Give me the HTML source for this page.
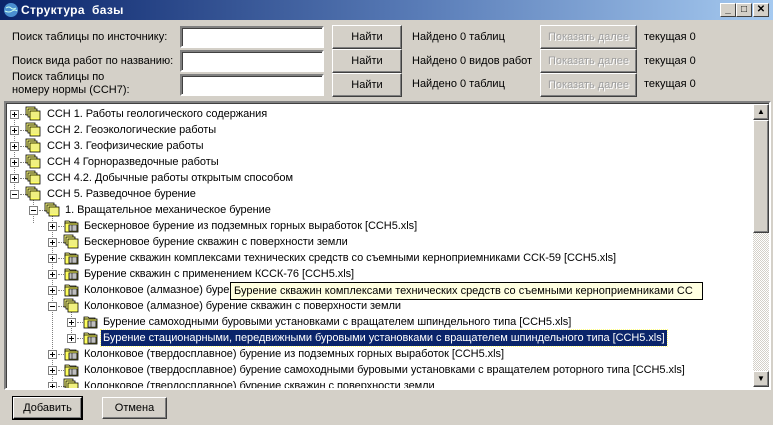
<!DOCTYPE html>
<html><head><meta charset="utf-8"><style>
*{box-sizing:border-box;margin:0;padding:0}
html,body{width:773px;height:425px;overflow:hidden}
body{background:#d4d0c8;font-family:"Liberation Sans",sans-serif;font-size:11px;color:#000;position:relative}
.a{position:absolute}
.title{left:0;top:0;width:773px;height:20px;background:linear-gradient(90deg,#0a246a,#5a7db8 55%,#a6caf0);color:#fff;font-weight:bold;font-size:12px;line-height:20px;padding-left:21px;letter-spacing:.3px}
.tb{width:16px;height:14px;top:3px;background:#d4d0c8;border:1px solid;border-color:#fff #404040 #404040 #fff;font-size:10px;line-height:12px;text-align:center;font-weight:bold;color:#000}
.inp{background:#fff;border:2px solid;border-color:#808080 #fff #fff #808080;box-shadow:inset 1px 1px 0 #404040;width:144px;height:22px}
.btn{border:1px solid;border-color:#fff #404040 #404040 #fff;box-shadow:inset -1px -1px 0 #808080;text-align:center;background:#d4d0c8}
.dis{color:#a0a0a0;text-shadow:1px 1px 0 #fff}
.tree{left:4px;top:101px;width:767px;height:289px;background:#fff;border:2px solid;border-color:#808080 #fff #fff #808080;box-shadow:inset 1px 1px 0 #404040;overflow:hidden}
.in{position:absolute;left:-2px;top:0;width:760px;height:285px}
.row{position:absolute;height:16px;line-height:16px;white-space:nowrap;letter-spacing:-0.05px}
.pb{position:absolute;width:9px;height:9px;border:1px solid #808080;background:#fff;top:4px}
.pb:before{content:"";position:absolute;left:1px;top:3px;width:5px;height:1px;background:#000}
.pb.p:after{content:"";position:absolute;left:3px;top:1px;width:1px;height:5px;background:#000}
.ic{position:absolute;top:0}
.dot{position:absolute;top:8px;height:1px;border-top:1px dotted #808080}
.vl{position:absolute;width:1px;border-left:1px dotted #808080}
</style></head><body>
<div class="a title"><svg class="a" style="left:3px;top:2px" width="16" height="16"><circle cx="8" cy="8" r="7" fill="#4a8fd0"/><path d="M3 6 Q6 4 8 6 T13 6 M2 9 Q6 11 9 9 T14 9" stroke="#cfe" fill="none"/></svg>Структура&nbsp; базы</div>
<div class="a tb" style="left:720px">_</div><div class="a tb" style="left:736px">□</div><div class="a tb" style="left:753px">✕</div>

<div class="a" style="left:12px;top:31px">Поиск таблицы по инсточнику:</div>
<div class="a" style="left:12px;top:55px">Поиск вида работ по названию:</div>
<div class="a" style="left:12px;top:71px;line-height:13px">Поиск таблицы по<br>номеру нормы (ССН7):</div>
<div class="a inp" style="left:180px;top:26px"></div>
<div class="a inp" style="left:180px;top:50px"></div>
<div class="a inp" style="left:180px;top:74px"></div>
<div class="a btn" style="left:332px;top:25px;width:70px;height:24px;line-height:22px">Найти</div>
<div class="a btn" style="left:332px;top:49px;width:70px;height:24px;line-height:22px">Найти</div>
<div class="a btn" style="left:332px;top:73px;width:70px;height:24px;line-height:22px">Найти</div>
<div class="a" style="left:412px;top:31px">Найдено 0 таблиц</div>
<div class="a" style="left:412px;top:55px">Найдено 0 видов работ</div>
<div class="a" style="left:412px;top:78px">Найдено 0 таблиц</div>
<div class="a btn dis" style="left:540px;top:25px;width:97px;height:24px;line-height:22px">Показать далее</div>
<div class="a btn dis" style="left:540px;top:49px;width:97px;height:24px;line-height:22px">Показать далее</div>
<div class="a btn dis" style="left:540px;top:73px;width:97px;height:24px;line-height:22px">Показать далее</div>
<div class="a" style="left:644px;top:31px">текущая 0</div>
<div class="a" style="left:644px;top:55px">текущая 0</div>
<div class="a" style="left:644px;top:78px">текущая 0</div>

<svg width="0" height="0" style="position:absolute"><defs>
<g id="m"><rect x="1" y="1" width="9" height="8" fill="#ffff80" stroke="#000" stroke-width=".8"/><rect x="3" y="3" width="9" height="8" fill="#ffff80" stroke="#000" stroke-width=".8"/><rect x="5" y="5" width="10" height="9" fill="#ffff60" stroke="#000" stroke-width=".8"/><path d="M6 7h8M6 9h8M6 11h8" stroke="#e0e0a0"/></g>
<g id="t"><path d="M2 3h4l1 1h6v2H2z" fill="#ffff80" stroke="#000" stroke-width=".8"/><rect x="2" y="5" width="13" height="9" fill="#ffff60" stroke="#000" stroke-width=".8"/><rect x="6" y="7" width="8" height="6" fill="#fff" stroke="#000" stroke-width=".8"/><path d="M6 9h8M6 11h8M9 7v6" stroke="#000" stroke-width=".6"/></g>
</defs></svg>

<div class="a tree"><div class="in">
<div class="vl" style="left:10px;top:12px;height:80px"></div>
<div class="vl" style="left:29px;top:92px;height:28px"></div>
<div class="vl" style="left:48px;top:108px;height:176px"></div>
<div class="vl" style="left:67px;top:204px;height:28px"></div>

<div class="row" style="top:3px;left:0"><div class="pb p" style="left:6px"></div><div class="dot" style="left:16px;width:6px"></div><svg class="ic" style="left:21px" width="16" height="16"><use href="#m"/></svg><span class="a" style="left:43px">ССН 1. Работы геологического содержания</span></div>
<div class="row" style="top:19px;left:0"><div class="pb p" style="left:6px"></div><div class="dot" style="left:16px;width:6px"></div><svg class="ic" style="left:21px" width="16" height="16"><use href="#m"/></svg><span class="a" style="left:43px">ССН 2. Геоэкологические работы</span></div>
<div class="row" style="top:35px;left:0"><div class="pb p" style="left:6px"></div><div class="dot" style="left:16px;width:6px"></div><svg class="ic" style="left:21px" width="16" height="16"><use href="#m"/></svg><span class="a" style="left:43px">ССН 3. Геофизические работы</span></div>
<div class="row" style="top:51px;left:0"><div class="pb p" style="left:6px"></div><div class="dot" style="left:16px;width:6px"></div><svg class="ic" style="left:21px" width="16" height="16"><use href="#m"/></svg><span class="a" style="left:43px">ССН 4 Горноразведочные работы</span></div>
<div class="row" style="top:67px;left:0"><div class="pb p" style="left:6px"></div><div class="dot" style="left:16px;width:6px"></div><svg class="ic" style="left:21px" width="16" height="16"><use href="#m"/></svg><span class="a" style="left:43px">ССН 4.2. Добычные работы открытым способом</span></div>
<div class="row" style="top:83px;left:0"><div class="pb" style="left:6px"></div><div class="dot" style="left:16px;width:6px"></div><svg class="ic" style="left:21px" width="16" height="16"><use href="#m"/></svg><span class="a" style="left:43px">ССН 5. Разведочное бурение</span></div>
<div class="row" style="top:99px;left:0"><div class="pb" style="left:25px"></div><div class="dot" style="left:35px;width:6px"></div><svg class="ic" style="left:40px" width="16" height="16"><use href="#m"/></svg><span class="a" style="left:61px">1. Вращательное механическое бурение</span></div>
<div class="row" style="top:115px;left:0"><div class="pb p" style="left:44px"></div><div class="dot" style="left:54px;width:6px"></div><svg class="ic" style="left:59px" width="16" height="16"><use href="#t"/></svg><span class="a" style="left:80px">Бескерновое бурение из подземных горных выработок [ССН5.xls]</span></div>
<div class="row" style="top:131px;left:0"><div class="pb p" style="left:44px"></div><div class="dot" style="left:54px;width:6px"></div><svg class="ic" style="left:59px" width="16" height="16"><use href="#m"/></svg><span class="a" style="left:80px">Бескерновое бурение скважин с поверхности земли</span></div>
<div class="row" style="top:147px;left:0"><div class="pb p" style="left:44px"></div><div class="dot" style="left:54px;width:6px"></div><svg class="ic" style="left:59px" width="16" height="16"><use href="#t"/></svg><span class="a" style="left:80px">Бурение скважин комплексами технических средств со съемными керноприемниками ССК-59 [ССН5.xls]</span></div>
<div class="row" style="top:163px;left:0"><div class="pb p" style="left:44px"></div><div class="dot" style="left:54px;width:6px"></div><svg class="ic" style="left:59px" width="16" height="16"><use href="#t"/></svg><span class="a" style="left:80px">Бурение скважин с применением КССК-76 [ССН5.xls]</span></div>
<div class="row" style="top:179px;left:0"><div class="pb p" style="left:44px"></div><div class="dot" style="left:54px;width:6px"></div><svg class="ic" style="left:59px" width="16" height="16"><use href="#t"/></svg><span class="a" style="left:80px">Колонковое (алмазное) бурение</span></div>
<div class="row" style="top:195px;left:0"><div class="pb" style="left:44px"></div><div class="dot" style="left:54px;width:6px"></div><svg class="ic" style="left:59px" width="16" height="16"><use href="#m"/></svg><span class="a" style="left:80px">Колонковое (алмазное) бурение скважин с поверхности земли</span></div>
<div class="row" style="top:211px;left:0"><div class="pb p" style="left:63px"></div><div class="dot" style="left:73px;width:6px"></div><svg class="ic" style="left:78px" width="16" height="16"><use href="#t"/></svg><span class="a" style="left:99px">Бурение самоходными буровыми установками с вращателем шпиндельного типа [ССН5.xls]</span></div>
<div class="row" style="top:227px;left:0"><div class="pb p" style="left:63px"></div><div class="dot" style="left:73px;width:6px"></div><svg class="ic" style="left:78px" width="16" height="16"><use href="#t"/></svg><span class="a" style="left:97px;top:0;height:16px;padding:0 2px;background:#0a246a;color:#fff;outline:1px dotted #ffff80">Бурение стационарными, передвижными буровыми установками с вращателем шпиндельного типа [ССН5.xls]</span></div>
<div class="row" style="top:243px;left:0"><div class="pb p" style="left:44px"></div><div class="dot" style="left:54px;width:6px"></div><svg class="ic" style="left:59px" width="16" height="16"><use href="#t"/></svg><span class="a" style="left:80px">Колонковое (твердосплавное) бурение из подземных горных выработок [ССН5.xls]</span></div>
<div class="row" style="top:259px;left:0"><div class="pb p" style="left:44px"></div><div class="dot" style="left:54px;width:6px"></div><svg class="ic" style="left:59px" width="16" height="16"><use href="#t"/></svg><span class="a" style="left:80px">Колонковое (твердосплавное) бурение самоходными буровыми установками с вращателем роторного типа [ССН5.xls]</span></div>
<div class="row" style="top:275px;left:0"><div class="pb p" style="left:44px"></div><div class="dot" style="left:54px;width:6px"></div><svg class="ic" style="left:59px" width="16" height="16"><use href="#m"/></svg><span class="a" style="left:80px">Колонковое (твердосплавное) бурение скважин с поверхности земли</span></div>

<div class="a" style="left:226px;top:179px;height:18px;width:473px;background:#ffffe1;border:1px solid #000;line-height:16px;padding-left:3px;white-space:nowrap;overflow:hidden">Бурение скважин комплексами технических средств со съемными керноприемниками СС</div>
</div>
<div class="a" style="left:747px;top:1px;width:16px;height:283px;background:repeating-conic-gradient(#d4d0c8 0 25%,#fff 0 50%) 0 0/2px 2px"></div>
<div class="a btn" style="left:747px;top:1px;width:16px;height:16px;font-size:8px;line-height:13px">▲</div>
<div class="a btn" style="left:747px;top:17px;width:16px;height:113px"></div>
<div class="a btn" style="left:747px;top:268px;width:16px;height:16px;font-size:8px;line-height:14px">▼</div>
</div>

<div class="a btn" style="left:13px;top:397px;width:69px;height:22px;line-height:20px;border-color:#fff #000 #000 #fff;outline:1px solid #000">Добавить</div>
<div class="a btn" style="left:102px;top:397px;width:65px;height:22px;line-height:20px">Отмена</div>
</body></html>
